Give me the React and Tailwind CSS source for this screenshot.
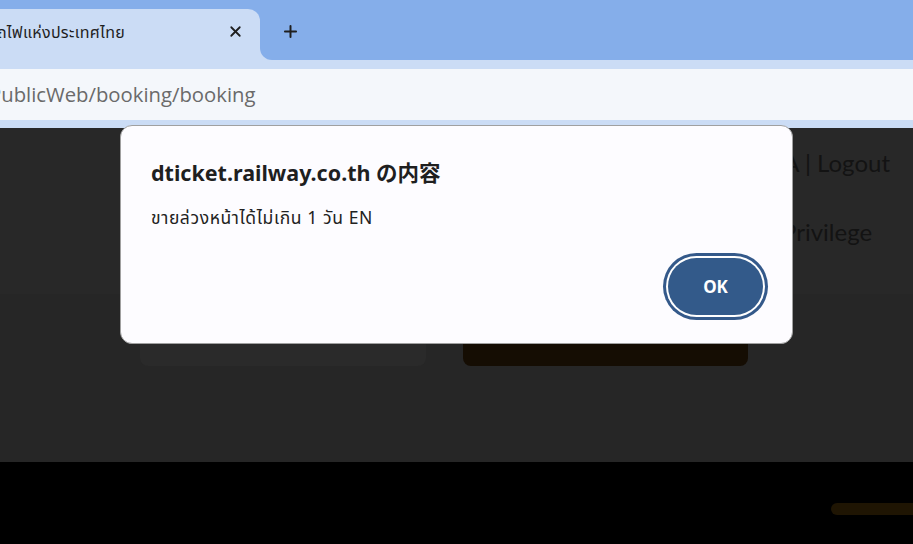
import { X, Plus } from "lucide-react";

export default function App() {
  return (
    <div className="relative w-[913px] h-[544px] overflow-hidden flex flex-col bg-black font-['Noto_Sans','Noto_Sans_Thai','Noto_Sans_CJK_JP',sans-serif]">
      {/* Tab strip */}
      <div className="h-[60px] bg-[#85aeea] flex items-end shrink-0">
        <div className="relative h-[51px] w-[260px] bg-[#cbdcf5] rounded-tr-[12px] flex items-center pb-[6px] overflow-visible">
          <div className="flex-1 overflow-hidden whitespace-nowrap">
            <span className="block ml-[-36px] text-[16px] tracking-[0.3px] text-[#1f1f1f]">การรถไฟแห่งประเทศไทย</span>
          </div>
          <X size={17} strokeWidth={2.5} className="text-[#1f1f1f] mr-[16px] shrink-0" />
          {/* flare */}
          <div className="absolute right-[-12px] bottom-0 w-[12px] h-[12px] bg-[#cbdcf5]">
            <div className="w-full h-full bg-[#85aeea] rounded-bl-[12px]" />
          </div>
        </div>
        <div className="h-[51px] flex items-center pl-[21px] pb-[6px]">
          <Plus size={19} strokeWidth={2.5} className="text-[#1f1f1f]" />
        </div>
      </div>

      {/* Toolbar */}
      <div className="h-[68px] bg-[#cbdcf5] pt-[9px] pb-[8px] shrink-0">
        <div className="h-full bg-[#f4f7fb] flex items-center overflow-hidden whitespace-nowrap">
          <span className="ml-[-11px] text-[20.3px] text-[#6a6a6a] font-['Open_Sans',sans-serif]">PublicWeb/booking/booking</span>
        </div>
      </div>

      {/* Page (dimmed) */}
      <div className="flex-1 flex flex-col">
        <div className="h-[166px] bg-[#282828] flex flex-col items-end pr-[23px] font-['Lato',sans-serif] text-[24px] text-[#131313]">
          <div className="mt-[20px] leading-[30px]">TA | Logout</div>
          <div className="mt-[39px] leading-[30px] self-start ml-[782px]">Privilege</div>
        </div>
        <div className="h-[168px] bg-[#262626] flex items-end gap-[37px] pl-[140px] pb-[96px]">
          <div className="w-[286px] h-[40px] bg-[#2a2a2a] rounded-[8px]" />
          <div className="w-[285px] h-[40px] bg-[#150d03] rounded-[8px]" />
        </div>
        <div className="flex-1 bg-black flex items-start justify-end pt-[41px]">
          <div className="w-[90px] h-[12px] mr-[-8px] bg-[#1f1503] rounded-full" />
        </div>
      </div>

      {/* Alert dialog */}
      <div className="absolute left-[120px] top-[125px] w-[673px] h-[219px] bg-[#fdfcff] rounded-[12px] border border-[#a0a0a0] flex flex-col pl-[30px] pr-[29px] pt-[29px] pb-[28px]">
        <div className="text-[21.5px] font-bold leading-[36px] text-[#1f1f1f]">dticket.railway.co.th の内容</div>
        <div className="mt-[13px] text-[17.5px] leading-[26px] tracking-[0.6px] text-[#222]">ขายล่วงหน้าได้ไม่เกิน 1 วัน EN</div>
        <div className="mt-auto flex justify-end">
          <button className="w-[95px] h-[57px] rounded-full bg-[#335a8a] text-white text-[17px] font-bold shadow-[0_0_0_2px_#fff,0_0_0_5px_#34598a]">
            OK
          </button>
        </div>
      </div>
    </div>
  );
}
